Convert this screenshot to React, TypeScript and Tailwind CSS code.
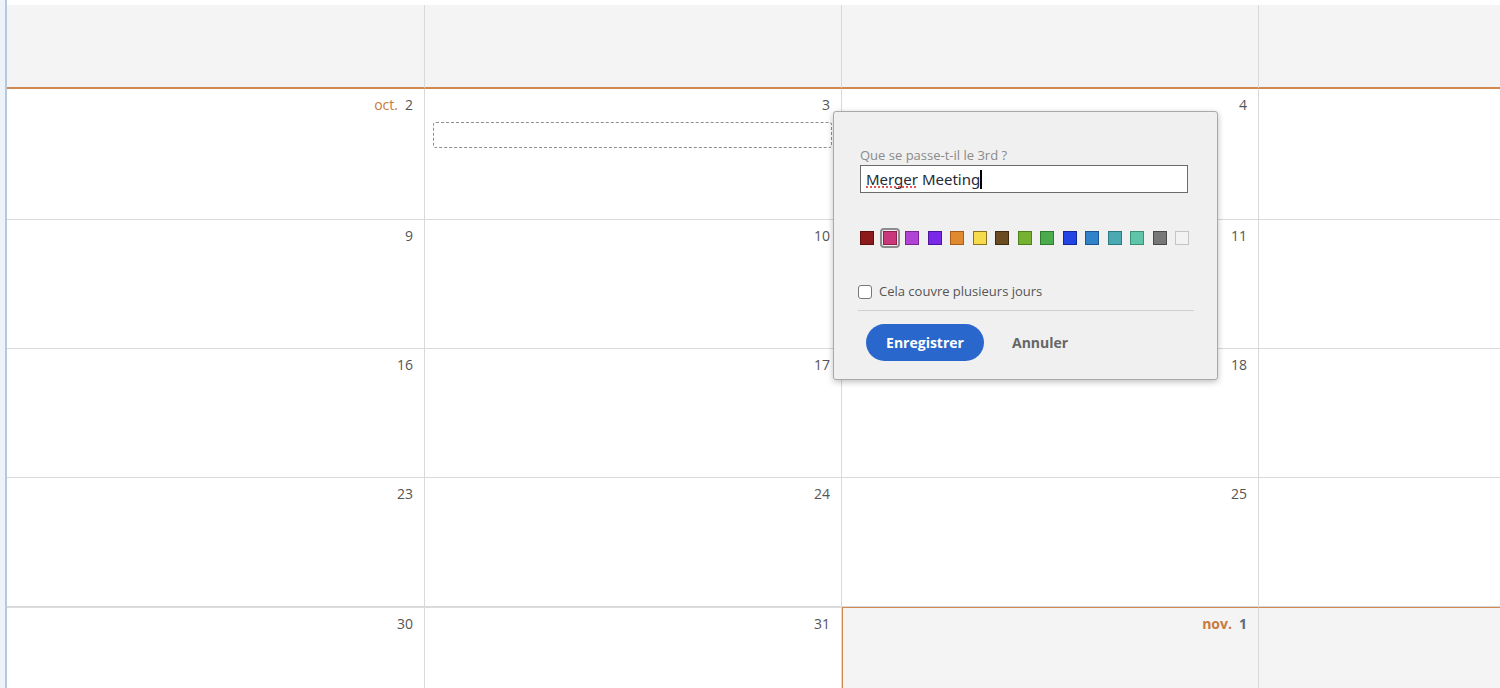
import { useState } from "react";

type Day = { label: string; month?: string; next?: boolean };

const weeks: Day[][] = [
  [{ label: "2", month: "oct." }, { label: "3" }, { label: "4" }, { label: "" }],
  [{ label: "9" }, { label: "10" }, { label: "11" }, { label: "" }],
  [{ label: "16" }, { label: "17" }, { label: "18" }, { label: "" }],
  [{ label: "23" }, { label: "24" }, { label: "25" }, { label: "" }],
  [
    { label: "30" },
    { label: "31" },
    { label: "1", month: "nov.", next: true },
    { label: "", next: true },
  ],
];

const rowHeights = ["h-[131px]", "h-[129px]", "h-[129px]", "h-[129px]", "h-[130px]"];

const swatches = [
  { bg: "bg-[#8e1b1b]", bd: "border-[#5e0f0f]" },
  { bg: "bg-[#c8387b]", bd: "border-[#8e2050]" },
  { bg: "bg-[#b043d6]", bd: "border-[#7a2496]" },
  { bg: "bg-[#7a2ae6]", bd: "border-[#4e169c]" },
  { bg: "bg-[#e08a30]", bd: "border-[#a85e18]" },
  { bg: "bg-[#f6dc4c]", bd: "border-[#8a7420]" },
  { bg: "bg-[#6b4b22]", bd: "border-[#3e2a10]" },
  { bg: "bg-[#76b232]", bd: "border-[#4e801c]" },
  { bg: "bg-[#4cab4c]", bd: "border-[#2e7a2e]" },
  { bg: "bg-[#2244e2]", bd: "border-[#12279a]" },
  { bg: "bg-[#3282c9]", bd: "border-[#1c5690]" },
  { bg: "bg-[#4aa9b2]", bd: "border-[#2c7a80]" },
  { bg: "bg-[#5fc5a8]", bd: "border-[#3a9078]" },
  { bg: "bg-[#777777]", bd: "border-[#4a4a4a]" },
  { bg: "bg-[#f2f2f2]", bd: "border-[#c4c4c4]" },
];

function DayCell({ day, row, col }: { day: Day; row: number; col: number }) {
  const isLastRow = row === 4;
  const cls = [
    "relative border-r border-[#d9d9d9] pr-[11px] pt-[5px] text-right text-[14px] text-[#555]",
    rowHeights[row],
    isLastRow ? "border-b-0" : "border-b border-[#d9d9d9]",
    day.next ? "bg-[#f4f4f4] border-t border-t-[#d3884d]" : "bg-white",
    day.next && col === 2 ? "border-l border-l-[#d3884d]" : "",
    isLastRow && !day.next ? "border-t border-t-[#dcdcdc]" : "",
  ].join(" ");
  return (
    <div className={cls}>
      {day.month && (
        <span className={`mr-[7px] text-[#c97a3c] ${day.next ? "font-bold" : ""}`}>
          {day.month}
        </span>
      )}
      <span className={day.next ? "font-bold text-[#5a6b85]" : ""}>{day.label}</span>
      {row === 0 && col === 1 && (
        <div className="mt-[7px] ml-[8px] mr-[-2px] h-[26px] rounded-[3px] border border-dashed border-[#8e8e8e]" />
      )}
    </div>
  );
}

export default function App() {
  const [title, setTitle] = useState("Merger Meeting");
  const [selected, setSelected] = useState(1);
  const [multi, setMulti] = useState(false);

  return (
    <div
      className="flex h-[688px] w-[1500px] overflow-hidden bg-white"
      style={{ fontFamily: '"Open Sans", "Liberation Sans", sans-serif' }}
    >
      <div className="w-[5px] shrink-0 bg-[#eef3f9]" />
      <div className="w-[2px] shrink-0 bg-[#b8c8dc]" />
      <div className="relative flex-1 overflow-hidden pt-[5px]">
        <div className="grid w-[1672px] grid-cols-[418px_417px_417px_420px]">
          {[0, 1, 2, 3].map((i) => (
            <div
              key={i}
              className="h-[84px] border-r border-b-2 border-r-[#d9d9d9] border-b-[#d3884d] bg-[#f4f4f4]"
            />
          ))}
          {weeks.map((week, r) =>
            week.map((day, c) => <DayCell key={`${r}-${c}`} day={day} row={r} col={c} />)
          )}
        </div>

        {/* Quick-add popover */}
        <div className="absolute left-[826px] top-[111px] w-[385px] rounded-[3px] border border-[#a9a9a9] bg-[#f0f0f0] px-[26px] pt-[36px] pb-[18px] shadow-[0_2px_6px_rgba(0,0,0,0.25)]">
          <label className="block text-[13px] leading-[15px] text-[#8a8a8a]">
            Que se passe-t-il le 3rd ?
          </label>
          <div className="relative mt-[2px] w-[328px]">
            <input
              value={title}
              onChange={(e) => setTitle(e.target.value)}
              className="h-[28px] w-full border border-[#6b6b6b] bg-white px-[5px] text-[15px] text-[#1f2937] caret-black outline-none"
              style={{ fontFamily: '"Noto Sans", "Open Sans", sans-serif' }}
            />
            {/* spell-check squiggle under "Merger" */}
            <span className="pointer-events-none absolute left-[6px] top-[21px] w-[50px] border-b-2 border-dotted border-[#e05555]" />
            <span className="pointer-events-none absolute left-[120px] top-[5px] h-[19px] w-[2px] bg-black" />
          </div>
          <div className="mt-[35px] flex items-center">
            {swatches.map((s, i) => (
              <button
                key={i}
                onClick={() => setSelected(i)}
                className="flex h-[20px] w-[22.5px] shrink-0 items-center justify-start"
              >
                <span
                  className={`ml-[-3px] flex h-[20px] w-[20px] items-center justify-center rounded-[4px] ${
                    selected === i ? "border-2 border-[#8c8c8c] bg-[#f0f0f0]" : ""
                  }`}
                >
                  <span className={`block h-[14px] w-[14px] border ${s.bg} ${s.bd}`} />
                </span>
              </button>
            ))}
          </div>
          <label className="mt-[34px] flex cursor-pointer items-center text-[13px] text-[#555]">
            <input
              type="checkbox"
              checked={multi}
              onChange={() => setMulti(!multi)}
              className="sr-only"
            />
            <span className="ml-[-2px] block h-[14px] w-[14px] rounded-[3px] border border-[#777] bg-white" />
            <span className="ml-[7px]">Cela couvre plusieurs jours</span>
          </label>
          <div className="mt-[8px] ml-[-2px] w-[336px] border-t border-[#d0d0d0]" />
          <div className="mt-[13px] flex items-center">
            <button className="ml-[6px] h-[37px] w-[118px] rounded-full bg-[#2a67cc] text-[14px] font-bold text-white">
              Enregistrer
            </button>
            <button className="ml-[28px] text-[14px] font-bold text-[#666]">Annuler</button>
          </div>
        </div>
      </div>
    </div>
  );
}
